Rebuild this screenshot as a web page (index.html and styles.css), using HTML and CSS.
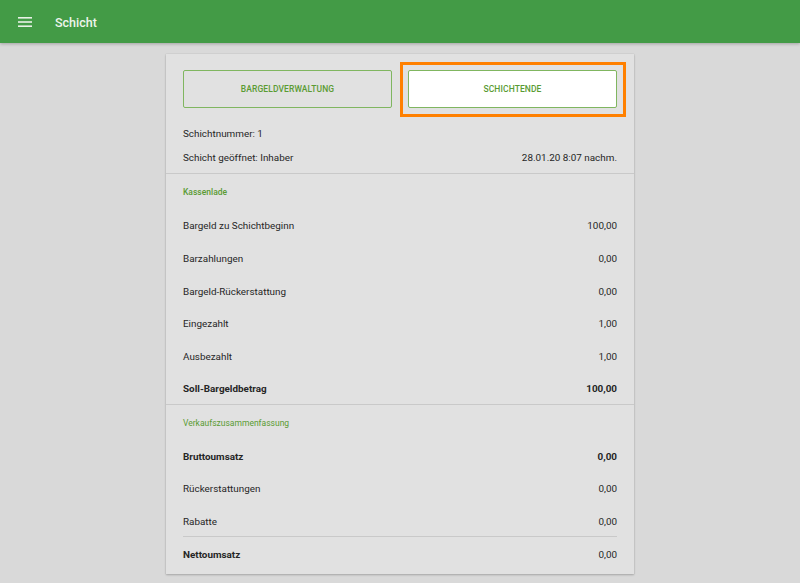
FILE: index.html
```html
<!DOCTYPE html>
<html lang="de">
<head>
<meta charset="utf-8">
<title>Schicht</title>
<link rel="stylesheet" href="styles.css">
</head>
<body>
<header class="appbar">
  <svg class="menu-icon" width="14" height="10" viewBox="0 0 14 10">
    <rect x="0" y="0" width="14" height="1.6" fill="#e8f2e6"/>
    <rect x="0" y="4.2" width="14" height="1.6" fill="#e8f2e6"/>
    <rect x="0" y="8.4" width="14" height="1.6" fill="#e8f2e6"/>
  </svg>
  <span class="appbar-title">Schicht</span>
</header>
<main class="card">
  <div class="actions">
    <button class="btn">BARGELDVERWALTUNG</button>
    <div class="btn-wrap">
      <button class="btn btn-white">SCHICHTENDE</button>
      <span class="highlight"></span>
    </div>
  </div>
  <div class="info">
    <div class="row"><span>Schichtnummer: 1</span></div>
    <div class="row"><span>Schicht geöffnet: Inhaber</span><span>28.01.20 8:07 nachm.</span></div>
  </div>
  <section class="section">
    <h2 class="section-title">Kassenlade</h2>
    <div class="row line"><span>Bargeld zu Schichtbeginn</span><span>100,00</span></div>
    <div class="row line"><span>Barzahlungen</span><span>0,00</span></div>
    <div class="row line"><span>Bargeld-Rückerstattung</span><span>0,00</span></div>
    <div class="row line"><span>Eingezahlt</span><span>1,00</span></div>
    <div class="row line"><span>Ausbezahlt</span><span>1,00</span></div>
    <div class="row line bold"><span>Soll-Bargeldbetrag</span><span>100,00</span></div>
  </section>
  <section class="section section-2">
    <h2 class="section-title s2">Verkaufszusammenfassung</h2>
    <div class="row line2 bold"><span>Bruttoumsatz</span><span>0,00</span></div>
    <div class="row line2"><span>Rückerstattungen</span><span>0,00</span></div>
    <div class="row line2"><span>Rabatte</span><span>0,00</span></div>
    <div class="row net"><span class="b">Nettoumsatz</span><span>0,00</span></div>
  </section>
</main>
</body>
</html>
```

FILE: styles.css
```css
* { box-sizing: border-box; }
html, body { margin: 0; padding: 0; }
body {
  background: #d9d9d9;
  font-family: Roboto, "Liberation Sans", sans-serif;
  color: #262626;
  height: 583px;
  overflow: hidden;
}
.appbar {
  height: 43px;
  background: #439b46;
  display: flex;
  align-items: center;
  padding-left: 18px;
  box-shadow: 0 1px 3px rgba(0,0,0,0.25);
  position: relative;
  z-index: 1;
}
.menu-icon { display: block; margin-top: 1px; }
.appbar-title {
  margin-left: 23px;
  color: #eef5ec;
  font-size: 12.5px;
  font-weight: 500;
  padding-top: 1px;
}
.card {
  width: 468px;
  margin: 11px auto 0;
  background: #e1e1e1;
  box-shadow: 0 1px 2px rgba(0,0,0,0.22), 0 0 1px rgba(0,0,0,0.15);
  padding: 16px 0 5px;
}
.actions {
  display: grid;
  grid-template-columns: 1fr 1fr;
  gap: 16px;
  padding: 0 17px;
}
.btn {
  height: 38px;
  width: 100%;
  border: 1px solid #80b660;
  border-radius: 2px;
  background: transparent;
  color: #5a9b33;
  font-family: Roboto, "Liberation Sans", sans-serif;
  font-size: 8.5px;
  font-weight: 500;
  letter-spacing: 0.1px;
  display: block;
  padding-top: 1px;
}
.btn-white { background: #ffffff; }
.btn-wrap { position: relative; }
.highlight {
  position: absolute;
  left: -8px; top: -8px; right: -9px; bottom: -9px;
  border: 3.5px solid #ff8000;
  pointer-events: none;
}
.info {
  padding: 12px 17px 5px;
}
.info .row { height: 24px; }
.row {
  display: flex;
  justify-content: space-between;
  align-items: center;
  font-size: 9.9px;
  padding: 2px 17px 0;
}
.info .row { padding: 2px 0 0; }
.section { border-top: 1px solid #c9c9c9; }
.section-title {
  margin: 0;
  height: 34.7px;
  padding: 2px 17px 0;
  display: flex;
  align-items: center;
  font-size: 8.5px;
  font-weight: 500;
  color: #5a9b33;
}
.section-title.s2 { height: 33.5px; font-weight: 400; }
.line { height: 32.6px; }
.line2 { height: 32.5px; }
.bold { font-weight: 700; }
.b { font-weight: 700; }
.net {
  height: 33px;
  margin: 0 17px;
  padding: 2px 0 0;
  border-top: 1px solid #c9c9c9;
}
```
